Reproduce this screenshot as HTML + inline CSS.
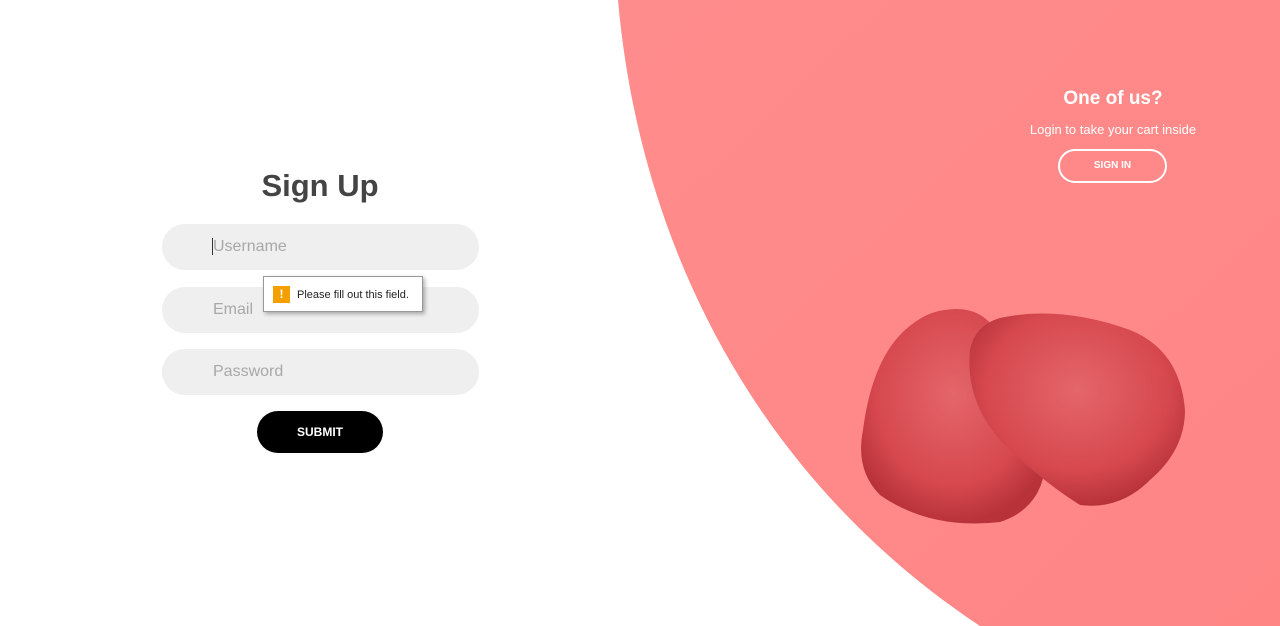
<!DOCTYPE html>
<html><head><meta charset="utf-8"><style>
*{margin:0;padding:0;box-sizing:border-box}
body{width:1280px;height:626px;overflow:hidden;background:#fff;font-family:"Liberation Sans",sans-serif;position:relative}
svg.bg{position:absolute;left:0;top:0}
h1{position:absolute;left:0;width:640px;top:168px;text-align:center;font-size:31px;font-weight:bold;color:#444}
.in{position:absolute;left:162px;width:317px;height:46px;border-radius:23px;background:#efefef;color:#a8a8a8;font-size:16px;padding-left:51px;line-height:46px}
.btn{position:absolute;left:257px;top:411px;width:126px;height:42px;border-radius:21px;background:#000;color:#fff;font-size:12px;font-weight:bold;text-align:center;line-height:42px}
.tip{position:absolute;left:263px;top:276px;width:160px;height:36px;background:#fff;border:1px solid #999;box-shadow:2px 2px 4px rgba(0,0,0,.3);font-size:11px;color:#222;line-height:36px;padding-left:33px}
.tip i{position:absolute;left:9px;top:9px;width:17px;height:17px;background:#f5a000;color:#fff;font-style:normal;font-weight:bold;font-size:12px;text-align:center;line-height:17px}
.r{position:absolute;left:1000px;width:226px;text-align:center;color:#fff}
</style></head><body>
<svg class="bg" width="1280" height="626">
<defs><linearGradient id="g" x1="0" y1="0" x2="1" y2="1"><stop offset="0" stop-color="#ff8c8c"/><stop offset="1" stop-color="#ff8585"/></linearGradient>
<radialGradient id="m" cx="50%" cy="40%" r="60%"><stop offset="0" stop-color="#e4666a"/><stop offset="0.7" stop-color="#d6484e"/><stop offset="1" stop-color="#b8323a"/></radialGradient></defs>
<path d="M618,0 C640,250 760,480 980,626 L1280,626 L1280,0Z" fill="url(#g)"/>
<path d="M945,310 Q975,305 992,325 Q1035,370 1045,440 Q1052,505 1000,522 Q930,530 880,495 Q855,470 863,430 Q872,360 905,330 Q925,312 945,310Z" fill="url(#m)"/>
<path d="M1000,318 Q1060,305 1130,330 Q1180,350 1185,410 Q1185,450 1150,480 Q1120,510 1080,505 Q1040,480 1000,440 Q965,400 970,350 Q975,325 1000,318Z" fill="url(#m)"/>
</svg>
<h1>Sign Up</h1>
<div class="in" style="top:224px"><span style="border-left:1px solid #333;margin-left:-1px"></span>Username</div>
<div class="in" style="top:287px">Email</div>
<div class="in" style="top:349px">Password</div>
<div class="btn">SUBMIT</div>
<div class="tip"><i>!</i>Please fill out this field.</div>
<div class="r" style="top:88px;font-size:19px;font-weight:bold">One of us?</div>
<div class="r" style="top:122px;font-size:13px">Login to take your cart inside</div>
<div style="position:absolute;left:1058px;top:149px;width:109px;height:34px;border:2px solid #fff;border-radius:17px;color:#fff;font-size:10px;font-weight:bold;text-align:center;line-height:30px">SIGN IN</div>
</body></html>
